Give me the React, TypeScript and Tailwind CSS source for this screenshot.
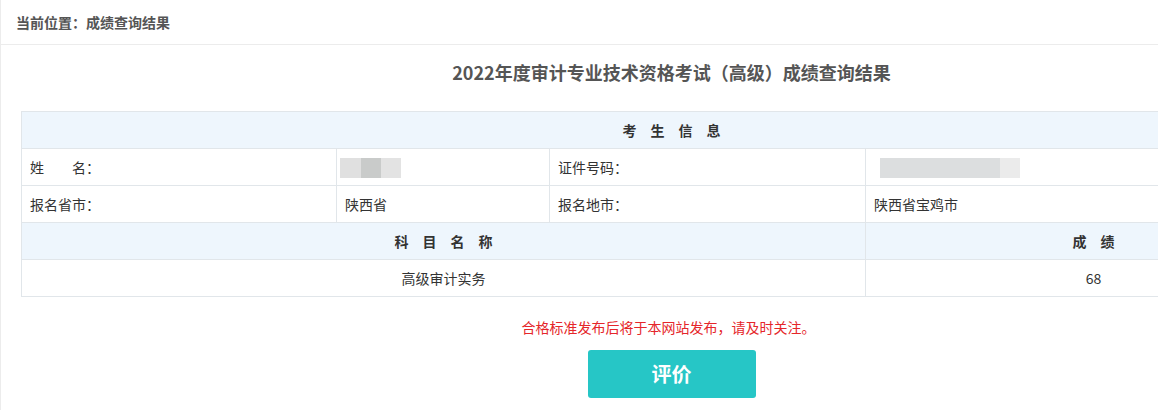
export default function App() {
  const cell = "border border-[#e1e6ea] h-[37px] px-[8px] text-[14px] text-[#333]"
  const head = "border border-[#e1e6ea] h-[37px] bg-[#eef6fd] text-[14px] font-bold text-[#333]"

  function Spaced({ text }: { text: string }) {
    return (
      <div className="flex justify-center gap-[14px]">
        {text.split("").map((c, i) => <span key={i}>{c}</span>)}
      </div>
    )
  }

  return (
    <div
      className="w-[1158px] h-[410px] overflow-hidden bg-white border-l border-[#ececec]"
      style={{ fontFamily: '"Noto Sans CJK SC", "Noto Sans", sans-serif' }}
    >
      <div className="h-[45px] border-b border-[#ececec] flex items-center pl-[15px] text-[14px] font-bold text-[#555]">
        当前位置：成绩查询结果
      </div>

      <div className="w-[1321px] pl-[20px]">
        <h1 className="pt-[17px] h-[66px] text-center text-[18px] leading-[20px] font-bold text-[#555]">
          2022年度审计专业技术资格考试（高级）成绩查询结果
        </h1>

        <table className="w-[1300px] border-collapse table-fixed">
          <colgroup>
            <col className="w-[315px]" />
            <col className="w-[213px]" />
            <col className="w-[316px]" />
            <col className="w-[456px]" />
          </colgroup>
          <tbody>
            <tr>
              <td colSpan={4} className={head}><Spaced text="考生信息" /></td>
            </tr>
            <tr>
              <td className={cell}>姓　　名：</td>
              <td className={cell + " pl-[3px]"}>
                <div className="flex h-[20px] mt-[2px]">
                  <span className="w-[21px] bg-[#e0e0e0]" />
                  <span className="w-[20px] bg-[#c9cbca]" />
                  <span className="w-[20px] bg-[#e3e3e3]" />
                </div>
              </td>
              <td className={cell}>证件号码：</td>
              <td className={cell + " pl-[14px]"}>
                <div className="flex h-[20px] mt-[2px]">
                  <span className="w-[120px] bg-[#dcdedf]" />
                  <span className="w-[20px] bg-[#ebebeb]" />
                </div>
              </td>
            </tr>
            <tr>
              <td className={cell}>报名省市：</td>
              <td className={cell}>陕西省</td>
              <td className={cell}>报名地市：</td>
              <td className={cell}>陕西省宝鸡市</td>
            </tr>
            <tr>
              <td colSpan={3} className={head}><Spaced text="科目名称" /></td>
              <td className={head}><Spaced text="成绩" /></td>
            </tr>
            <tr>
              <td colSpan={3} className={cell + " text-center"}>高级审计实务</td>
              <td className={cell + " text-center"}>68</td>
            </tr>
          </tbody>
        </table>

        <div className="flex flex-col items-center pt-[20px]">
          <p className="text-[14px] leading-[20px] text-[#e5262a] pr-[6px]">
            合格标准发布后将于本网站发布，请及时关注。
          </p>
          <button className="mt-[13px] w-[168px] h-[48px] rounded-[3px] bg-[#26c6c6] text-white text-[20px] font-bold">
            评价
          </button>
        </div>
      </div>
    </div>
  )
}
